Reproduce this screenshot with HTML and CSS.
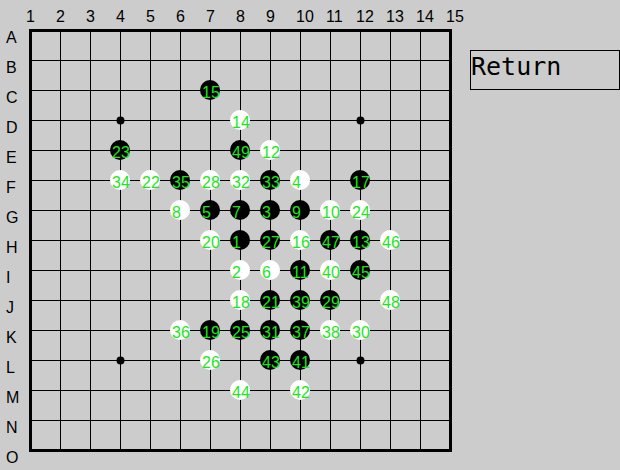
FILE: index.html
```html
<!DOCTYPE html>
<html>
<head>
<meta charset="utf-8">
<link rel="stylesheet" href="styles.css">
</head>
<body>
<div class="app">
<svg class="board" width="470" height="470" viewBox="0 0 470 470">
  <g class="collabels">
    <text x="26" y="22">1</text><text x="56" y="22">2</text><text x="86" y="22">3</text><text x="116" y="22">4</text><text x="146" y="22">5</text><text x="176" y="22">6</text><text x="206" y="22">7</text><text x="236" y="22">8</text><text x="266" y="22">9</text><text x="296" y="22">10</text><text x="326" y="22">11</text><text x="356" y="22">12</text><text x="386" y="22">13</text><text x="416" y="22">14</text><text x="446" y="22">15</text>
  </g>
  <g class="rowlabels">
    <text x="6" y="43">A</text><text x="6" y="73">B</text><text x="6" y="103">C</text><text x="6" y="133">D</text><text x="6" y="163">E</text><text x="6" y="193">F</text><text x="6" y="223">G</text><text x="6" y="253">H</text><text x="6" y="283">I</text><text x="6" y="313">J</text><text x="6" y="343">K</text><text x="6" y="373">L</text><text x="6" y="403">M</text><text x="6" y="433">N</text><text x="6" y="463">O</text>
  </g>
  <g class="grid">
    <path d="M60.5 30V450M90.5 30V450M120.5 30V450M150.5 30V450M180.5 30V450M210.5 30V450M240.5 30V450M270.5 30V450M300.5 30V450M330.5 30V450M360.5 30V450M390.5 30V450M420.5 30V450"/>
    <path d="M30 60.5H450M30 90.5H450M30 120.5H450M30 150.5H450M30 180.5H450M30 210.5H450M30 240.5H450M30 270.5H450M30 300.5H450M30 330.5H450M30 360.5H450M30 390.5H450M30 420.5H450"/>
  </g>
  <rect class="frame" x="30.5" y="30.5" width="420" height="420"/>
  <g class="stars">
    <circle cx="120.5" cy="120.5" r="4"/><circle cx="360.5" cy="120.5" r="4"/><circle cx="120.5" cy="360.5" r="4"/><circle cx="360.5" cy="360.5" r="4"/><circle cx="240.5" cy="240.5" r="4"/>
  </g>
  <g class="stones">
    <circle class="b" cx="240" cy="240" r="10"/><text x="232" y="248">1</text>
    <circle class="w" cx="240" cy="270" r="10"/><text x="232" y="278">2</text>
    <circle class="b" cx="270" cy="210" r="10"/><text x="262" y="218">3</text>
    <circle class="w" cx="300" cy="180" r="10"/><text x="292" y="188">4</text>
    <circle class="b" cx="210" cy="210" r="10"/><text x="202" y="218">5</text>
    <circle class="w" cx="270" cy="270" r="10"/><text x="262" y="278">6</text>
    <circle class="b" cx="240" cy="210" r="10"/><text x="232" y="218">7</text>
    <circle class="w" cx="180" cy="210" r="10"/><text x="172" y="218">8</text>
    <circle class="b" cx="300" cy="210" r="10"/><text x="292" y="218">9</text>
    <circle class="w" cx="330" cy="210" r="10"/><text x="322" y="218">10</text>
    <circle class="b" cx="300" cy="270" r="10"/><text x="292" y="278">11</text>
    <circle class="w" cx="270" cy="150" r="10"/><text x="262" y="158">12</text>
    <circle class="b" cx="360" cy="240" r="10"/><text x="352" y="248">13</text>
    <circle class="w" cx="240" cy="120" r="10"/><text x="232" y="128">14</text>
    <circle class="b" cx="210" cy="90" r="10"/><text x="202" y="98">15</text>
    <circle class="w" cx="300" cy="240" r="10"/><text x="292" y="248">16</text>
    <circle class="b" cx="360" cy="180" r="10"/><text x="352" y="188">17</text>
    <circle class="w" cx="240" cy="300" r="10"/><text x="232" y="308">18</text>
    <circle class="b" cx="210" cy="330" r="10"/><text x="202" y="338">19</text>
    <circle class="w" cx="210" cy="240" r="10"/><text x="202" y="248">20</text>
    <circle class="b" cx="270" cy="300" r="10"/><text x="262" y="308">21</text>
    <circle class="w" cx="150" cy="180" r="10"/><text x="142" y="188">22</text>
    <circle class="b" cx="120" cy="150" r="10"/><text x="112" y="158">23</text>
    <circle class="w" cx="360" cy="210" r="10"/><text x="352" y="218">24</text>
    <circle class="b" cx="240" cy="330" r="10"/><text x="232" y="338">25</text>
    <circle class="w" cx="210" cy="360" r="10"/><text x="202" y="368">26</text>
    <circle class="b" cx="270" cy="240" r="10"/><text x="262" y="248">27</text>
    <circle class="w" cx="210" cy="180" r="10"/><text x="202" y="188">28</text>
    <circle class="b" cx="330" cy="300" r="10"/><text x="322" y="308">29</text>
    <circle class="w" cx="360" cy="330" r="10"/><text x="352" y="338">30</text>
    <circle class="b" cx="270" cy="330" r="10"/><text x="262" y="338">31</text>
    <circle class="w" cx="240" cy="180" r="10"/><text x="232" y="188">32</text>
    <circle class="b" cx="270" cy="180" r="10"/><text x="262" y="188">33</text>
    <circle class="w" cx="120" cy="180" r="10"/><text x="112" y="188">34</text>
    <circle class="b" cx="180" cy="180" r="10"/><text x="172" y="188">35</text>
    <circle class="w" cx="180" cy="330" r="10"/><text x="172" y="338">36</text>
    <circle class="b" cx="300" cy="330" r="10"/><text x="292" y="338">37</text>
    <circle class="w" cx="330" cy="330" r="10"/><text x="322" y="338">38</text>
    <circle class="b" cx="300" cy="300" r="10"/><text x="292" y="308">39</text>
    <circle class="w" cx="330" cy="270" r="10"/><text x="322" y="278">40</text>
    <circle class="b" cx="300" cy="360" r="10"/><text x="292" y="368">41</text>
    <circle class="w" cx="300" cy="390" r="10"/><text x="292" y="398">42</text>
    <circle class="b" cx="270" cy="360" r="10"/><text x="262" y="368">43</text>
    <circle class="w" cx="240" cy="390" r="10"/><text x="232" y="398">44</text>
    <circle class="b" cx="360" cy="270" r="10"/><text x="352" y="278">45</text>
    <circle class="w" cx="390" cy="240" r="10"/><text x="382" y="248">46</text>
    <circle class="b" cx="330" cy="240" r="10"/><text x="322" y="248">47</text>
    <circle class="w" cx="390" cy="300" r="10"/><text x="382" y="308">48</text>
    <circle class="b" cx="240" cy="150" r="10"/><text x="232" y="158">49</text>
  </g>
</svg>
<div class="side">
  <div class="return">Return</div>
</div>
</div>
</body>
</html>
```
FILE: styles.css
```css
html, body {
  margin: 0;
  padding: 0;
  background: #cccccc;
  width: 620px;
  height: 470px;
  overflow: hidden;
}
.app {
  display: flex;
  align-items: flex-start;
}
.board {
  display: block;
  flex: none;
}
.collabels text, .rowlabels text {
  font-family: "Liberation Sans", Arial, sans-serif;
  font-size: 16px;
  fill: #000;
}
.grid path {
  stroke: #000;
  stroke-width: 1;
  fill: none;
}
.frame {
  fill: none;
  stroke: #000;
  stroke-width: 3;
}
.stars circle {
  fill: #000;
}
.stones .b { fill: #000; }
.stones .w { fill: #fff; }
.stones text {
  font-family: "Liberation Sans", Arial, sans-serif;
  font-size: 16px;
  fill: #1ee61e;
}
.side {
  padding-top: 50px;
}
.return {
  box-sizing: border-box;
  width: 150px;
  height: 40px;
  border: 1px solid #000;
  padding: 3px 0 0 0;
  font-family: "DejaVu Sans Mono", monospace;
  font-size: 25px;
  line-height: 25px;
  color: #000;
}
```
